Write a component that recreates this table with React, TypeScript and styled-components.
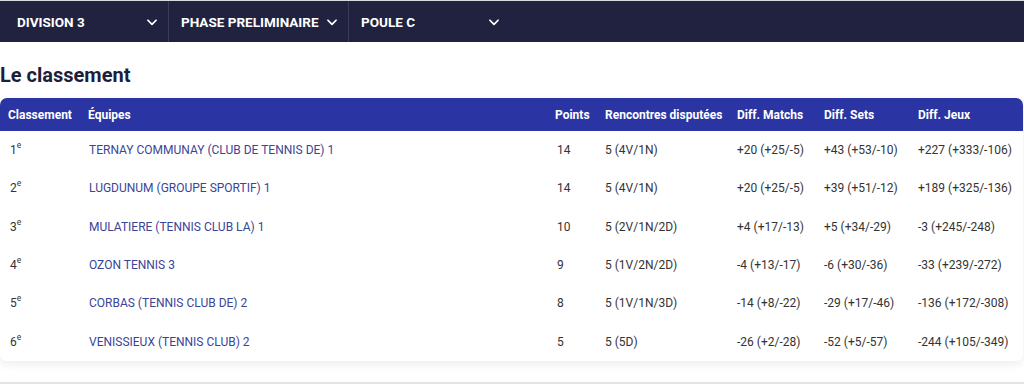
import styled, { createGlobalStyle } from 'styled-components';

const GlobalStyle = createGlobalStyle`
  body {
    margin: 0;
    background: #ffffff;
    font-family: Roboto, "Liberation Sans", sans-serif;
  }
`;

const Page = styled.div`
  width: 1024px;
  height: 384px;
  overflow: hidden;
  border-bottom: 2px solid #e4e4e8;
  box-sizing: border-box;
`;

const TopBar = styled.nav`
  display: flex;
  height: 42px;
  background: #21223f;
  border-top: 1px solid #d9d9de;
  box-sizing: border-box;
`;

const Select = styled.div<{ $w: number; $pl: number }>`
  width: ${p => p.$w}px;
  display: flex;
  align-items: center;
  justify-content: space-between;
  padding: 0 9px 0 ${p => p.$pl}px;
  box-sizing: border-box;
  border-right: 1px solid #3b3c5a;
  color: #ffffff;
  font-weight: 700;
  font-size: 13.5px;
  &:last-child {
    border-right: none;
  }
`;

const Title = styled.h2`
  margin: 21px 0 11px 0;
  font-size: 20px;
  font-weight: 700;
  color: #1d1e3a;
  line-height: 24px;
`;

const Card = styled.div`
  margin-right: 1px;
  border-radius: 7px;
  background: #fff;
  box-shadow: 0 3px 10px rgba(0, 0, 0, 0.08);
  overflow: hidden;
`;

const Table = styled.table`
  width: 100%;
  border-collapse: collapse;
  table-layout: fixed;
  font-size: 12px;
`;

const Th = styled.th<{ $w?: number }>`
  ${p => (p.$w ? `width: ${p.$w}px;` : '')}
  box-sizing: border-box;
  background: #2a35a3;
  color: #fff;
  font-weight: 700;
  text-align: left;
  height: 33px;
  padding: 0 0 0 8px;
  white-space: nowrap;
`;

const Td = styled.td<{ $pl?: number }>`
  box-sizing: border-box;
  height: 38.3px;
  padding: 0 0 0 ${p => p.$pl ?? 8}px;
  color: #333;
  white-space: nowrap;
`;

const Team = styled.a`
  color: #3a4598;
  text-decoration: none;
`;

const Sup = styled.sup`
  font-size: 8.5px;
  vertical-align: 6px;
  line-height: 0;
`;

const Chevron = () => (
  <svg width="14" height="14" viewBox="0 0 24 24" fill="none" stroke="#fff" strokeWidth="3" strokeLinecap="round" strokeLinejoin="round">
    <path d="M5 9l7 7 7-7" />
  </svg>
);

const rows = [
  ['1', 'TERNAY COMMUNAY (CLUB DE TENNIS DE) 1', '14', '5 (4V/1N)', '+20 (+25/-5)', '+43 (+53/-10)', '+227 (+333/-106)'],
  ['2', 'LUGDUNUM (GROUPE SPORTIF) 1', '14', '5 (4V/1N)', '+20 (+25/-5)', '+39 (+51/-12)', '+189 (+325/-136)'],
  ['3', 'MULATIERE (TENNIS CLUB LA) 1', '10', '5 (2V/1N/2D)', '+4 (+17/-13)', '+5 (+34/-29)', '-3 (+245/-248)'],
  ['4', 'OZON TENNIS 3', '9', '5 (1V/2N/2D)', '-4 (+13/-17)', '-6 (+30/-36)', '-33 (+239/-272)'],
  ['5', 'CORBAS (TENNIS CLUB DE) 2', '8', '5 (1V/1N/3D)', '-14 (+8/-22)', '-29 (+17/-46)', '-136 (+172/-308)'],
  ['6', 'VENISSIEUX (TENNIS CLUB) 2', '5', '5 (5D)', '-26 (+2/-28)', '-52 (+5/-57)', '-244 (+105/-349)'],
];

export default function App() {
  return (
    <Page>
      <GlobalStyle />
      <TopBar>
        <Select $w={169} $pl={17}>DIVISION 3<Chevron /></Select>
        <Select $w={180} $pl={12}>PHASE PRELIMINAIRE<Chevron /></Select>
        <Select $w={161} $pl={12}>POULE C<Chevron /></Select>
      </TopBar>
      <Title>Le classement</Title>
      <Card>
        <Table>
          <thead>
            <tr>
              <Th $w={80}>Classement</Th>
              <Th $w={467}>Équipes</Th>
              <Th $w={50}>Points</Th>
              <Th $w={132}>Rencontres disputées</Th>
              <Th $w={87}>Diff. Matchs</Th>
              <Th $w={94}>Diff. Sets</Th>
              <Th>Diff. Jeux</Th>
            </tr>
          </thead>
          <tbody>
            {rows.map(r => (
              <tr key={r[0]}>
                <Td $pl={10}>{r[0]}<Sup>e</Sup></Td>
                <Td $pl={9}><Team href="#">{r[1]}</Team></Td>
                <Td $pl={10}>{r[2]}</Td>
                <Td>{r[3]}</Td>
                <Td>{r[4]}</Td>
                <Td>{r[5]}</Td>
                <Td>{r[6]}</Td>
              </tr>
            ))}
          </tbody>
        </Table>
      </Card>
    </Page>
  );
}
